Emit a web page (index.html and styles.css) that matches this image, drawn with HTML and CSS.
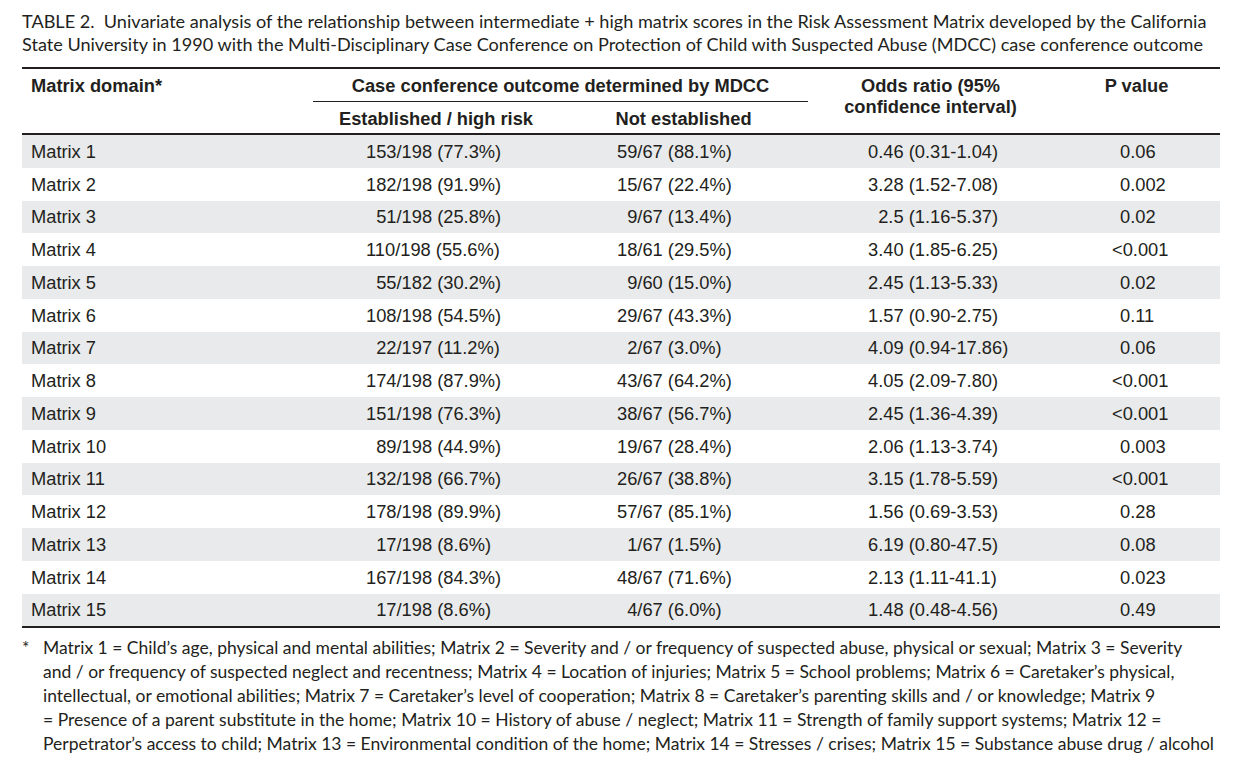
FILE: index.html
```html
<!DOCTYPE html>
<html lang="en">
<head>
<meta charset="utf-8">
<title>Table 2</title>
<link rel="stylesheet" href="styles.css">
</head>
<body>
<div class="page">
  <p class="caption"><span class="line">TABLE 2.&nbsp; Univariate analysis of the relationship between intermediate + high matrix scores in the Risk Assessment Matrix developed by the California</span><span class="line">State University in 1990 with the Multi-Disciplinary Case Conference on Protection of Child with Suspected Abuse (MDCC) case conference outcome</span></p>
  <table class="data">
    <colgroup>
      <col class="w1"><col class="w2"><col class="w3"><col class="w4"><col class="w5">
    </colgroup>
    <thead>
      <tr class="hr1">
        <th rowspan="2" class="first hb">Matrix domain*</th>
        <th colspan="2" class="span">Case conference outcome determined by MDCC</th>
        <th rowspan="2" class="hb">Odds ratio (95%<br>confidence interval)</th>
        <th rowspan="2" class="hb">P value</th>
      </tr>
      <tr class="hr2">
        <th class="hb">Established / high risk</th>
        <th class="hb">Not established</th>
      </tr>
    </thead>
    <tbody>
      <tr><td class="first">Matrix 1</td><td class="a">153/198 (77.3%)</td><td class="b">59/67 (88.1%)</td><td class="c">0.46 (0.31-1.04)</td><td class="d">0.06</td></tr>
      <tr><td class="first">Matrix 2</td><td class="a">182/198 (91.9%)</td><td class="b">15/67 (22.4%)</td><td class="c">3.28 (1.52-7.08)</td><td class="d">0.002</td></tr>
      <tr><td class="first">Matrix 3</td><td class="a i1">51/198 (25.8%)</td><td class="b i1">9/67 (13.4%)</td><td class="c i1">2.5 (1.16-5.37)</td><td class="d">0.02</td></tr>
      <tr><td class="first">Matrix 4</td><td class="a">110/198 (55.6%)</td><td class="b">18/61 (29.5%)</td><td class="c">3.40 (1.85-6.25)</td><td class="d"><span class="lt">&lt;</span>0.001</td></tr>
      <tr><td class="first">Matrix 5</td><td class="a i1">55/182 (30.2%)</td><td class="b i1">9/60 (15.0%)</td><td class="c">2.45 (1.13-5.33)</td><td class="d">0.02</td></tr>
      <tr><td class="first">Matrix 6</td><td class="a">108/198 (54.5%)</td><td class="b">29/67 (43.3%)</td><td class="c">1.57 (0.90-2.75)</td><td class="d">0.11</td></tr>
      <tr><td class="first">Matrix 7</td><td class="a i1">22/197 (11.2%)</td><td class="b i1">2/67 (3.0%)</td><td class="c">4.09 (0.94-17.86)</td><td class="d">0.06</td></tr>
      <tr><td class="first">Matrix 8</td><td class="a">174/198 (87.9%)</td><td class="b">43/67 (64.2%)</td><td class="c">4.05 (2.09-7.80)</td><td class="d"><span class="lt">&lt;</span>0.001</td></tr>
      <tr><td class="first">Matrix 9</td><td class="a">151/198 (76.3%)</td><td class="b">38/67 (56.7%)</td><td class="c">2.45 (1.36-4.39)</td><td class="d"><span class="lt">&lt;</span>0.001</td></tr>
      <tr><td class="first">Matrix 10</td><td class="a i1">89/198 (44.9%)</td><td class="b">19/67 (28.4%)</td><td class="c">2.06 (1.13-3.74)</td><td class="d">0.003</td></tr>
      <tr><td class="first">Matrix 11</td><td class="a">132/198 (66.7%)</td><td class="b">26/67 (38.8%)</td><td class="c">3.15 (1.78-5.59)</td><td class="d"><span class="lt">&lt;</span>0.001</td></tr>
      <tr><td class="first">Matrix 12</td><td class="a">178/198 (89.9%)</td><td class="b">57/67 (85.1%)</td><td class="c">1.56 (0.69-3.53)</td><td class="d">0.28</td></tr>
      <tr><td class="first">Matrix 13</td><td class="a i1">17/198 (8.6%)</td><td class="b i1">1/67 (1.5%)</td><td class="c">6.19 (0.80-47.5)</td><td class="d">0.08</td></tr>
      <tr><td class="first">Matrix 14</td><td class="a">167/198 (84.3%)</td><td class="b">48/67 (71.6%)</td><td class="c">2.13 (1.11-41.1)</td><td class="d">0.023</td></tr>
      <tr><td class="first">Matrix 15</td><td class="a i1">17/198 (8.6%)</td><td class="b i1">4/67 (6.0%)</td><td class="c">1.48 (0.48-4.56)</td><td class="d">0.49</td></tr>
    </tbody>
  </table>
  <div class="note">
    <span class="mark">*</span>
    <p class="note-text"><span class="line">Matrix 1 = Child’s age, physical and mental abilities; Matrix 2 = Severity and / or frequency of suspected abuse, physical or sexual; Matrix 3 = Severity</span><span class="line">and / or frequency of suspected neglect and recentness; Matrix 4 = Location of injuries; Matrix 5 = School problems; Matrix 6 = Caretaker’s physical,</span><span class="line">intellectual, or emotional abilities; Matrix 7 = Caretaker’s level of cooperation; Matrix 8 = Caretaker’s parenting skills and / or knowledge; Matrix 9</span><span class="line">= Presence of a parent substitute in the home; Matrix 10 = History of abuse / neglect; Matrix 11 = Strength of family support systems; Matrix 12 =</span><span class="line">Perpetrator’s access to child; Matrix 13 = Environmental condition of the home; Matrix 14 = Stresses / crises; Matrix 15 = Substance abuse drug / alcohol</span></p>
  </div>
</div>
</body>
</html>
```

FILE: styles.css
```css
html, body {
  margin: 0;
  padding: 0;
  background: #ffffff;
  color: #231f20;
}

.page {
  padding: 10px 20px 0 22px;
}

.caption {
  margin: 0;
  font-family: "Lato", "Open Sans", sans-serif;
  font-size: 18.1px;
  line-height: 23px;
}

.line {
  display: block;
  white-space: nowrap;
}

.data {
  margin-top: 11px;
  width: 1198px;
  table-layout: fixed;
  border-collapse: separate;
  border-spacing: 0;
  border-top: 2px solid #231f20;
  border-bottom: 2px solid #231f20;
  font-family: "Liberation Sans", Arial, sans-serif;
  font-size: 18.3px;
}

.w1 { width: 291px; }
.w2 { width: 246px; }
.w3 { width: 249px; }
.w4 { width: 245px; }
.w5 { width: 167px; }

th {
  font-weight: bold;
  text-align: center;
  vertical-align: top;
  line-height: 21px;
  padding: 6px 0 0 0;
  box-sizing: border-box;
}

.hr1 th { height: 33px; }
.hr2 th { height: 33px; padding-top: 5.5px; }

th.first {
  text-align: left;
  padding-left: 9px;
}

th.span {
  border-bottom: 1.5px solid #231f20;
}

th.hb {
  border-bottom: 2px solid #231f20;
}

td {
  height: 32.75px;
  padding: 0;
  line-height: 21px;
  vertical-align: middle;
  white-space: nowrap;
}

tbody tr:nth-child(odd) td {
  background: #e9eaeb;
}

td.first { padding-left: 9px; }
td.a { padding-left: 53px; }
td.b { padding-left: 58px; }
td.c { padding-left: 60px; }
td.d { padding-left: 67px; }

td.a.i1 { padding-left: calc(53px + 1ch); }
td.b.i1 { padding-left: calc(58px + 1ch); }
td.c.i1 { padding-left: calc(60px + 1ch); }

.lt {
  margin-left: -8px;
}

.note {
  display: flex;
  margin-top: 8px;
  font-family: "Lato", "Open Sans", sans-serif;
  font-size: 17.5px;
  line-height: 24px;
}

.mark {
  width: 21px;
  flex: none;
}

.note-text {
  margin: 0;
}
```
